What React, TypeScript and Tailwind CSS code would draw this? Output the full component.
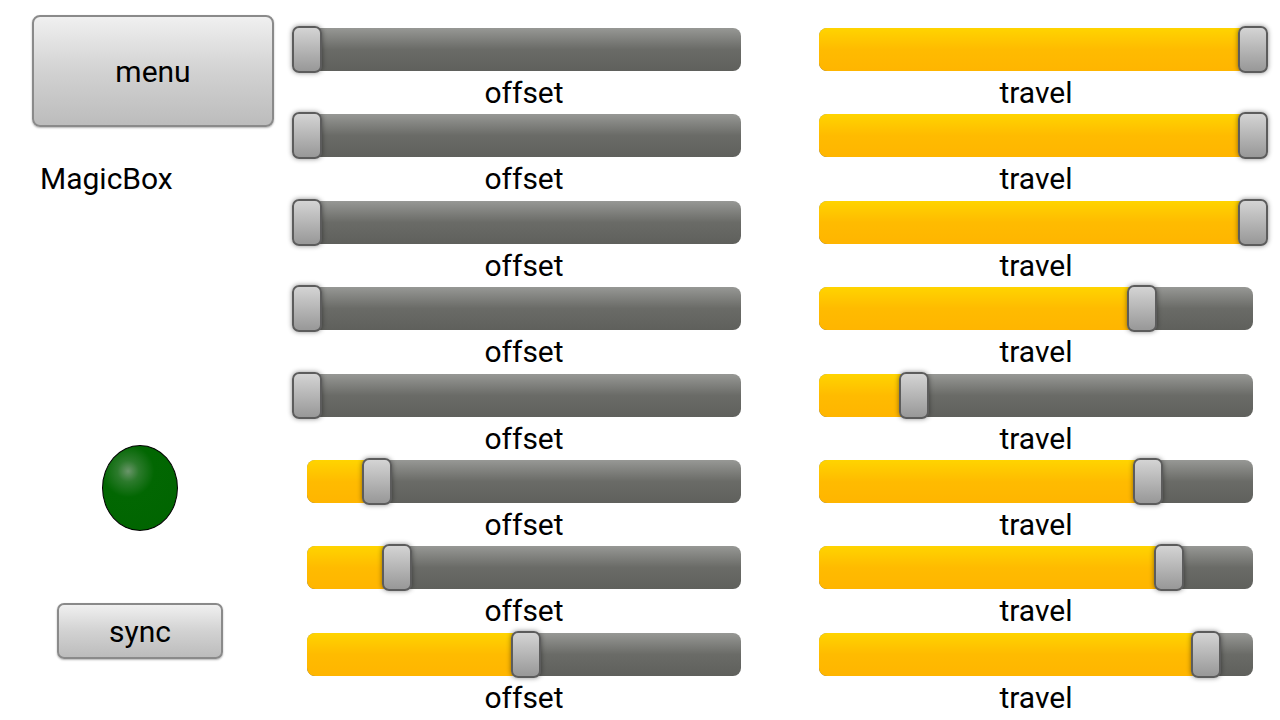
import React from 'react';

const offsets = [0, 0, 0, 0, 0, 0.161, 0.207, 0.505];
const travels = [1, 1, 1, 0.744, 0.219, 0.758, 0.806, 0.892];

function Slider({ value, label }: { value: number; label: string }) {
  return (
    <div className="flex h-[86.4px] w-[462px] flex-col px-[14px]">
      <div className="relative h-[43px] w-full rounded-[8px] bg-linear-to-b from-[#979895] via-[#6a6b67] to-[#5f605c]">
        <div
          className="absolute top-0 left-0 h-full rounded-l-[8px] bg-linear-to-b from-[#ffd400] via-[#ffbb00] to-[#ffb500]"
          style={{ width: `${value * 100}%` }}
        />
        <div
          className="absolute top-[-2px] h-[47px] w-[30px] rounded-[7px] border-2 border-[#5c5c5c] bg-linear-to-b from-[#d4d4d4] to-[#989898] shadow-[0_0_5px_rgba(0,0,0,0.45)]"
          style={{ left: `calc(${value * 100}% - 15px)` }}
        />
      </div>
      <p className="mt-[4px] text-center text-[30px] leading-[36px] text-black">{label}</p>
    </div>
  );
}

function App() {
  return (
    <div className="flex h-[720px] w-[1280px] bg-white font-['Roboto','Liberation_Sans',sans-serif] text-black">
      <div className="flex w-[293px] flex-col items-start pt-[15px] pl-[32px]">
        <button className="flex h-[112px] w-[242px] items-center justify-center rounded-[8px] border-2 border-[#8a8a8a] bg-linear-to-b from-[#f0f0f0] via-[#d2d2d2] to-[#bcbcbc] text-[30px] shadow-[0_1px_2px_rgba(0,0,0,0.3)]">
          menu
        </button>
        <p className="mt-[36px] ml-[8px] text-[30px] leading-[32px]">MagicBox</p>
        <div className="mt-[250px] ml-[70px] h-[86px] w-[76px] rounded-[50%] border border-black bg-[radial-gradient(circle_at_34%_30%,#6a956a_0%,#2c7a2c_14%,#026702_34%,#006400_100%)]" />
        <button className="mt-[72px] ml-[25px] flex h-[56px] w-[166px] items-center justify-center rounded-[7px] border-2 border-[#8a8a8a] bg-linear-to-b from-[#f0f0f0] via-[#d2d2d2] to-[#bcbcbc] text-[30px] shadow-[0_1px_2px_rgba(0,0,0,0.3)]">
          sync
        </button>
      </div>
      <div className="flex flex-col pt-[28px]">
        {offsets.map((v, i) => (
          <Slider key={i} value={v} label="offset" />
        ))}
      </div>
      <div className="ml-[50px] flex flex-col pt-[28px]">
        {travels.map((v, i) => (
          <Slider key={i} value={v} label="travel" />
        ))}
      </div>
    </div>
  );
}

export default App;
